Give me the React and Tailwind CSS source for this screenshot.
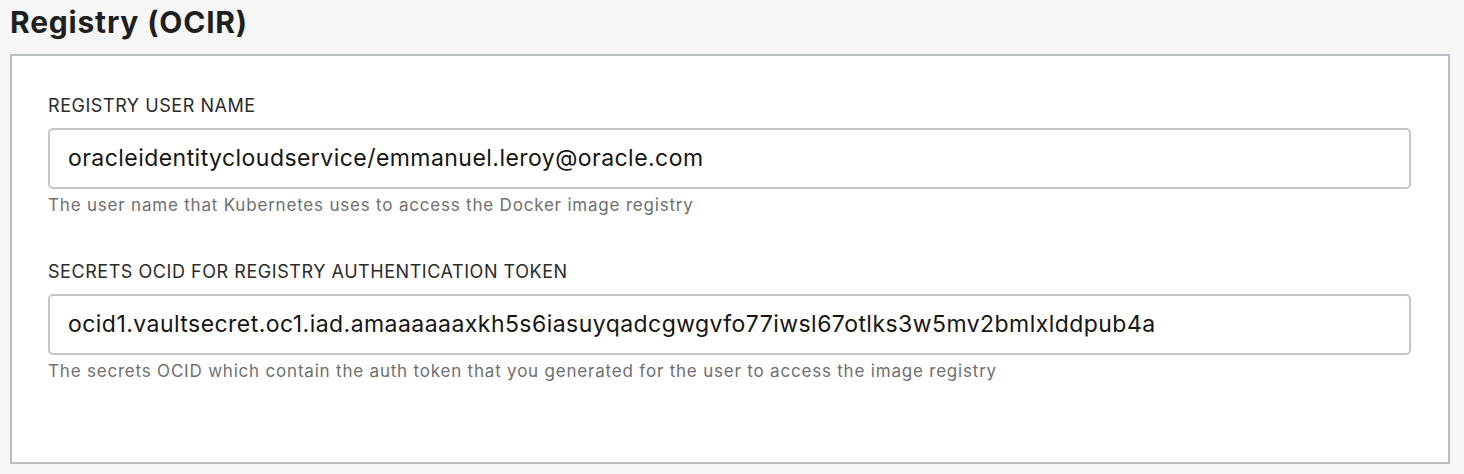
export default function App() {
  const font = { fontFamily: 'Inter, "Liberation Sans", Arial, sans-serif' };
  return (
    <div className="w-[1464px] h-[474px] bg-[#f6f6f6] overflow-hidden" style={font}>
      <div className="pl-[10px] pr-[14px]">
        <h1 className="h-[54px] pt-[5px] text-[30px] leading-[34px] tracking-[0.8px] font-bold text-[#1f1f1f]">Registry (OCIR)</h1>
        <div className="h-[410px] border-2 border-[#b9bcc1] bg-white pl-[36px] pr-[37px] pt-[40px]">
          <Field
            label="REGISTRY USER NAME"
            value="oracleidentitycloudservice/emmanuel.leroy@oracle.com"
            help="The user name that Kubernetes uses to access the Docker image registry"
          />
          <div className="h-[47px]" />
          <Field
            label="SECRETS OCID FOR REGISTRY AUTHENTICATION TOKEN"
            value="ocid1.vaultsecret.oc1.iad.amaaaaaaxkh5s6iasuyqadcgwgvfo77iwsl67otlks3w5mv2bmlxlddpub4a"
            help="The secrets OCID which contain the auth token that you generated for the user to access the image registry"
          />
        </div>
      </div>
    </div>
  );
}

function Field({ label, value, help }) {
  return (
    <div>
      <div className="text-[18px] leading-[20px] tracking-[0.55px] text-[#2b2b2b] mb-[12px]">{label}</div>
      <div className="h-[61px] border-2 border-[#c3c5c9] rounded-[5px] flex items-center px-[18px] text-[23px] tracking-[0.45px] text-[#161513]">
        {value}
      </div>
      <div className="mt-[6px] text-[17px] leading-[20px] tracking-[0.8px] text-[#6f6f6f]">{help}</div>
    </div>
  );
}
